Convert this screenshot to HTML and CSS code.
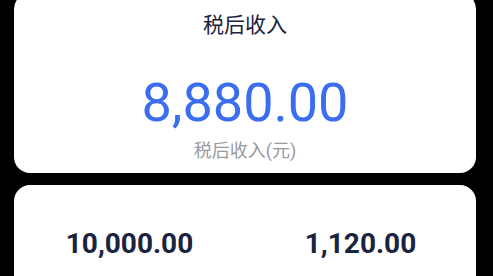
FILE: index.html
```html
<!DOCTYPE html>
<html lang="zh-CN">
<head>
<meta charset="utf-8">
<title>税后收入</title>
<link rel="stylesheet" href="styles.css">
</head>
<body>
<main class="page">
  <section class="card card-main">
    <h1 class="title">税后收入</h1>
    <div class="amount">8,880.00</div>
    <div class="amount-label">税后收入(元)</div>
  </section>
  <section class="card card-stats">
    <div class="stat">
      <div class="stat-value">10,000.00</div>
    </div>
    <div class="stat">
      <div class="stat-value">1,120.00</div>
    </div>
  </section>
</main>
</body>
</html>
```

FILE: styles.css
```css
html, body {
  margin: 0;
  padding: 0;
  background: #000;
}
body {
  font-family: Roboto, "Noto Sans CJK SC", "Noto Sans", sans-serif;
  overflow: hidden;
}
.page {
  display: flex;
  flex-direction: column;
  gap: 12px;
  padding: 0 17px 0 14px;
  margin-top: -7px;
}
.card {
  background: #fff;
  border-radius: 16px;
}
.card-main {
  display: flex;
  flex-direction: column;
  align-items: center;
  padding: 15px 0 10px;
}
.title {
  margin: 0;
  font-size: 21px;
  font-weight: 400;
  line-height: 30px;
  color: #1a2340;
  font-family: "Noto Sans CJK SC", sans-serif;
}
.amount {
  margin-top: 33px;
  font-size: 54px;
  line-height: 64px;
  color: #3a6df0;
  font-family: Roboto, sans-serif;
}
.amount-label {
  margin-top: 4px;
  font-size: 18px;
  line-height: 24px;
  color: #9a9a9f;
  font-family: Roboto, "Noto Sans CJK SC", sans-serif;
}
.card-stats {
  display: grid;
  grid-template-columns: 1fr 1fr;
  padding: 41px 0 40px;
}
.stat {
  display: flex;
  flex-direction: column;
  align-items: center;
}
.stat-value {
  font-size: 28px;
  font-weight: 700;
  line-height: 36px;
  color: #1a2340;
  font-family: Roboto, sans-serif;
}
```
